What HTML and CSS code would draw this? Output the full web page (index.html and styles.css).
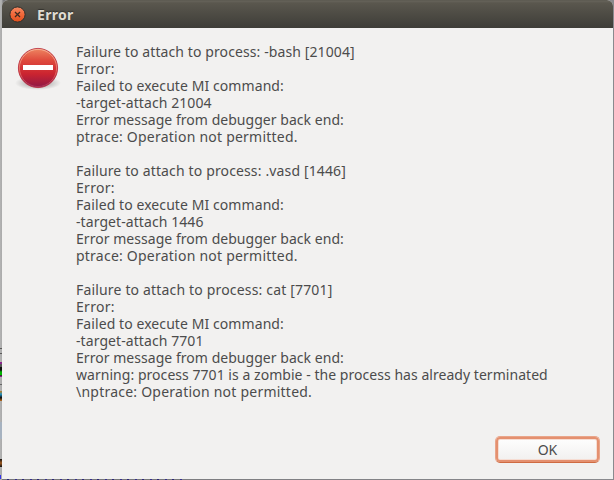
FILE: index.html
```
<!DOCTYPE html>
<html lang="en">
<head>
<meta charset="utf-8">
<title>Error</title>
<link rel="stylesheet" href="styles.css">
</head>
<body>
<div class="desktop">
<main class="dialog">
  <header class="titlebar">
    <svg class="close" width="17" height="17" viewBox="0 0 17 17">
      <defs><linearGradient id="closeFill" x1="0" y1="0" x2="0" y2="1"><stop offset="0" stop-color="#f58a63"/><stop offset=".5" stop-color="#f0683a"/><stop offset="1" stop-color="#df4f1c"/></linearGradient></defs>
      <circle cx="8.5" cy="8.5" r="7.6" fill="url(#closeFill)" stroke="#34302a" stroke-width="1"/>
      <path d="M6 6l5 5M11 6l-5 5" stroke="#3c2a20" stroke-width="1.3" fill="none"/>
    </svg>
    <h1 class="title">Error</h1>
  </header>
  <section class="content">
    <svg class="stop" width="48" height="48" viewBox="0 0 48 48">
      <defs>
        <linearGradient id="stopFill" x1="0" y1="0" x2="0" y2="1"><stop offset="0" stop-color="#ee8662"/><stop offset=".3" stop-color="#df4b3d"/><stop offset=".65" stop-color="#cb2430"/><stop offset="1" stop-color="#8e1746"/></linearGradient>
        <linearGradient id="stopRim" x1="0" y1="0" x2="0" y2="1"><stop offset="0" stop-color="#f6b093"/><stop offset=".6" stop-color="#e36a60"/><stop offset="1" stop-color="#ab345c"/></linearGradient>
        <radialGradient id="shade"><stop offset="0" stop-color="#000" stop-opacity=".4"/><stop offset=".7" stop-color="#000" stop-opacity=".12"/><stop offset="1" stop-color="#000" stop-opacity="0"/></radialGradient>
      </defs>
      <ellipse cx="24" cy="39" rx="23" ry="7" fill="url(#shade)"/>
      <circle cx="24" cy="24" r="19.6" fill="url(#stopFill)" stroke="#b52638" stroke-width=".8"/>
      <circle cx="24" cy="24" r="18.6" fill="none" stroke="url(#stopRim)" stroke-width="1"/>
      <rect x="9" y="21" width="30" height="5" fill="#fff"/>
    </svg>
    <div class="message">
      <p><span class="a1">Failure to attach to process: -bash [21004]</span></p>
      <p><span class="er">Error:</span></p>
      <p><span class="mi">Failed to execute MI command:</span></p>
      <p><span class="a2">-target-attach 21004</span></p>
      <p><span class="be">Error message from debugger back end:</span></p>
      <p><span class="pt">ptrace: Operation not permitted.</span></p>
      <p class="gap"><span class="b1">Failure to attach to process: .vasd [1446]</span></p>
      <p><span class="er">Error:</span></p>
      <p><span class="mi">Failed to execute MI command:</span></p>
      <p><span class="b2">-target-attach 1446</span></p>
      <p><span class="be">Error message from debugger back end:</span></p>
      <p><span class="pt">ptrace: Operation not permitted.</span></p>
      <p class="gap"><span class="c1">Failure to attach to process: cat [7701]</span></p>
      <p><span class="er">Error:</span></p>
      <p><span class="mi">Failed to execute MI command:</span></p>
      <p><span class="b2">-target-attach 7701</span></p>
      <p><span class="be">Error message from debugger back end:</span></p>
      <p><span class="wa">warning: process 7701 is a zombie - the process has already terminated</span></p>
      <p><span class="np">\nptrace: Operation not permitted.</span></p>
    </div>
  </section>
  <footer class="actions"><button class="ok">OK</button></footer>
</main>
</div>
</body>
</html>
```
FILE: styles.css
```
* { box-sizing: border-box; }
body { margin: 0; font-family: "Noto Sans", "Open Sans", sans-serif; }
.desktop {
  width: 614px; height: 480px; padding: 0 1px 1px 2px; overflow: hidden;
  background:
    linear-gradient(#5a5a5a, #5a5a5a) 0 348px / 2px 1px no-repeat,
    linear-gradient(#5a5a5a, #5a5a5a) 0 353px / 2px 1px no-repeat,
    linear-gradient(#8c248c 0 2px, #555 2px 5px, #111 5px 8px, #00b400 10px 13px, #333 13px 14px, #8c248c 14px) 0 362px / 2px 15px no-repeat,
    linear-gradient(#666, #666) 0 384px / 2px 1px no-repeat,
    linear-gradient(#c08020, #2090c0, #111, #c07020) 0 391px / 2px 10px no-repeat,
    linear-gradient(#a6b2c0, #a6b2c0) 0 422px / 2px 17px no-repeat,
    linear-gradient(#111, #a05a20, #111) 0 459px / 2px 8px no-repeat,
    linear-gradient(#3333ee, #3333ee) 0 475px / 1px 4px no-repeat,
    repeating-linear-gradient(90deg, #77777a 0 5px, #2c2678 5px 7px, #77777a 7px 13px, #35308a 13px 15px) 2px 479px / 180px 1px no-repeat,
    linear-gradient(90deg, #b4b4b4, #aaa 2px, #77777a 3px, #8a8a8e);
}
.dialog { width: 611px; height: 479px; background: #f2f1f0; border-radius: 6px 6px 0 0; overflow: hidden; display: flex; flex-direction: column; }
.titlebar {
  height: 28px; padding-left: 7px; display: flex; align-items: center; gap: 11px; flex: none;
  background: linear-gradient(#57554c 0, #66635a 1px, #5a574e 3px, #3e3d38 28px);
}
.close { display: block; margin-top: 1px; }
.title { margin: 2px 0 0; font-size: 14px; line-height: 20px; font-weight: 700; letter-spacing: .3px; color: #dfdbd2; text-shadow: 0 -1px 1px #33322e; }
.content { display: flex; padding: 15px 0 0 12px; }
.stop { flex: none; margin-top: 1px; }
.message { margin-left: 14px; color: #4c4c4c; font-size: 14px; line-height: 17px; }
.message p { margin: 0; height: 17px; white-space: nowrap; }
.message .gap { margin-top: 17px; }
.a1 { letter-spacing: .1px; }
.er { letter-spacing: .3px; }
.mi { letter-spacing: .08px; }
.a2, .b2 { letter-spacing: .08px; }
.be { letter-spacing: .04px; }
.pt, .np { letter-spacing: .23px; }
.b1 { letter-spacing: .14px; }
.c1 { letter-spacing: .17px; }
.wa { letter-spacing: .04px; }
.actions { margin-top: auto; padding: 0 13px 16px 0; display: flex; justify-content: flex-end; }
.ok {
  width: 105px; height: 27px; padding: 1px 0 0; border: 1px solid #e9a58a; border-bottom-color: #cf6b42; border-radius: 5px;
  background: linear-gradient(#fff, #f0efee); box-shadow: inset 0 0 0 2px #e4906f, inset 0 0 0 3px #f6ddd3;
  color: #4c4c4c; font: 14px/24px "Noto Sans", sans-serif;
}
```
